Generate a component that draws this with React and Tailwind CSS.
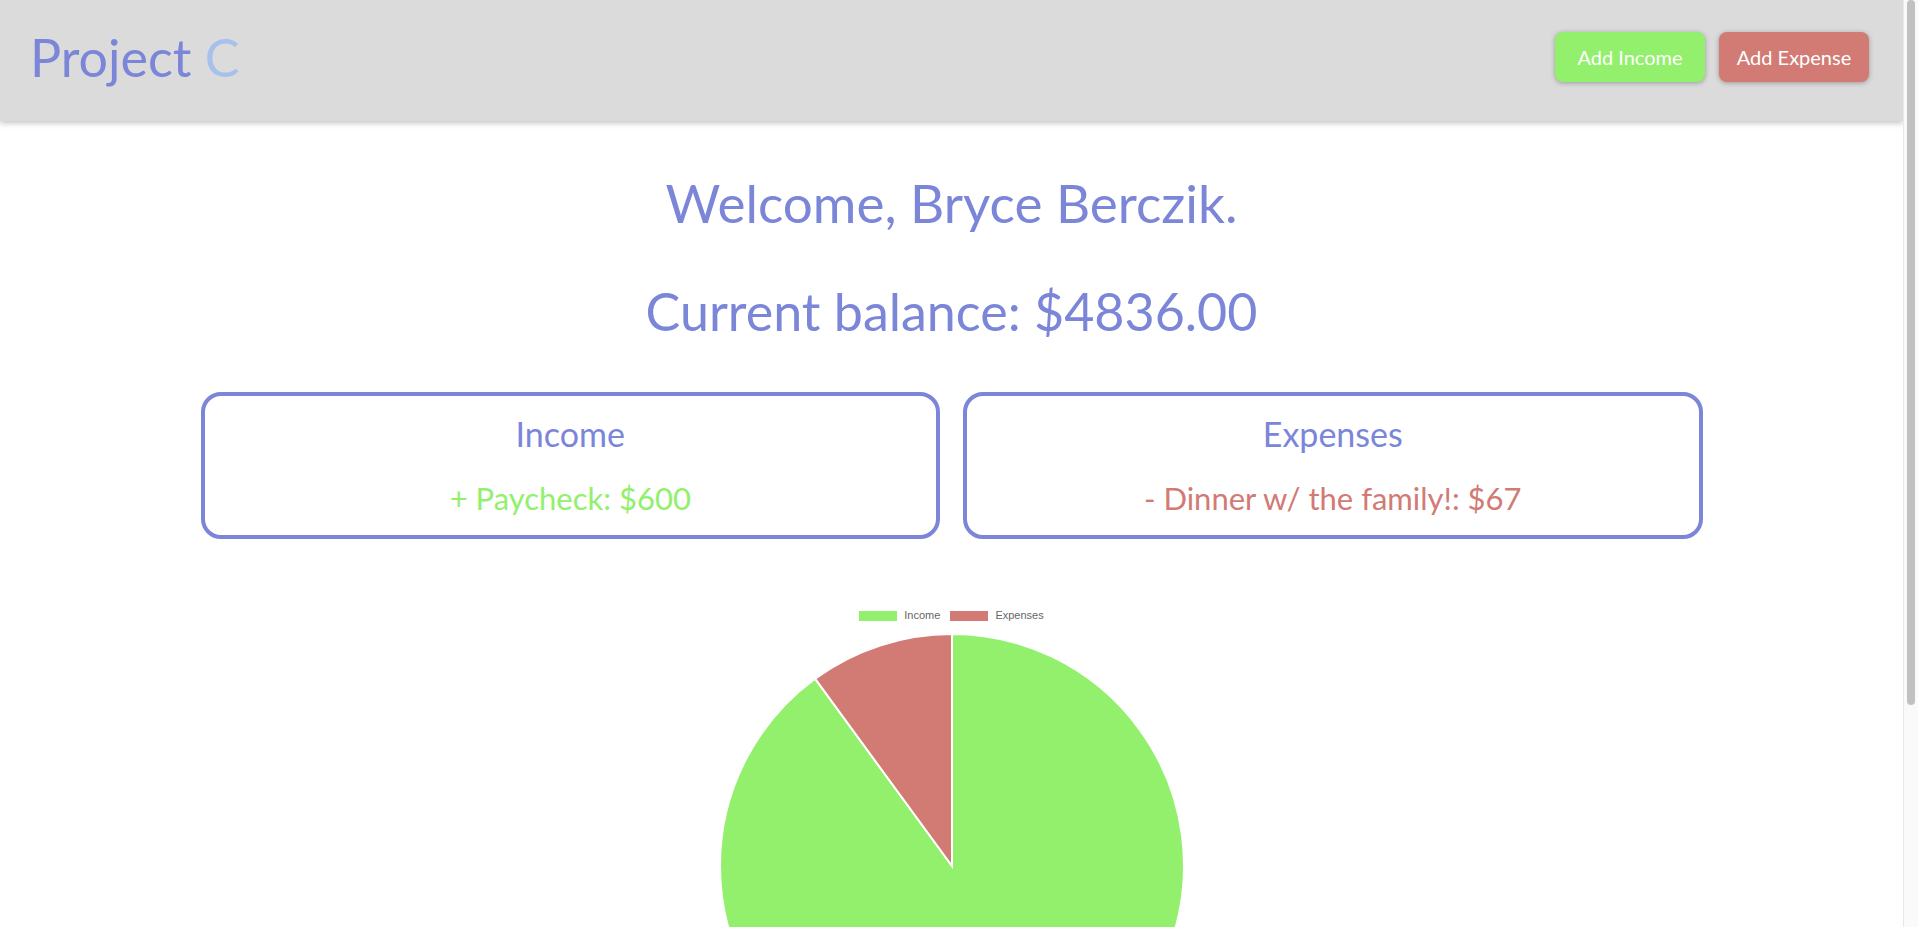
export default function App() {
  const income = 600;
  const expense = 67;
  const r = 232;
  const theta = (income / (income + expense)) * 2 * Math.PI;
  const px = (r + r * Math.sin(theta)).toFixed(2);
  const py = (r - r * Math.cos(theta)).toFixed(2);

  return (
    <div className="flex h-screen overflow-hidden bg-white font-['Lato',sans-serif] text-[#7b86d9]">
      <div className="min-w-0 flex-1">
        <header className="flex h-[121px] items-center justify-between bg-[#dbdbdb] pl-[30px] pr-[34px] shadow-[0_2px_6px_rgba(0,0,0,0.25)]">
          <div className="pb-[8px] text-[52px] leading-none">
            Project <span className="text-[#a6c2ec]">C</span>
          </div>
          <div className="mb-[8px] flex gap-[14px]">
            <button className="h-[50px] w-[150px] rounded-[8px] bg-[#92f06c] text-[20px] text-white shadow-[0_1px_5px_rgba(0,0,0,0.3)]">
              Add Income
            </button>
            <button className="h-[50px] w-[150px] rounded-[8px] bg-[#d27a74] text-[20px] text-white shadow-[0_1px_5px_rgba(0,0,0,0.3)]">
              Add Expense
            </button>
          </div>
        </header>

        <main className="flex flex-col items-center">
          <h1 className="mt-[55px] text-[53px] leading-none">Welcome, Bryce Berczik.</h1>
          <h2 className="mt-[56px] text-[52px] leading-none">Current balance: $4836.00</h2>

          <div className="mt-[55px] grid w-[1502px] grid-cols-2 gap-[23px]">
            <div className="flex h-[147px] flex-col items-center gap-[32px] rounded-[20px] border-4 border-[#7b86d9] pt-[21px]">
              <div className="text-[34px] leading-none">Income</div>
              <div className="text-[31px] leading-none text-[#92f06c]">+ Paycheck: $600</div>
            </div>
            <div className="flex h-[147px] flex-col items-center gap-[32px] rounded-[20px] border-4 border-[#7b86d9] pt-[21px]">
              <div className="text-[34px] leading-none">Expenses</div>
              <div className="text-[31px] leading-none text-[#d27a74]">- Dinner w/ the family!: $67</div>
            </div>
          </div>

          <div className="mt-[71px] flex items-center gap-[10px] font-['Liberation_Sans',sans-serif] text-[11px] leading-none text-[#666]">
            <div className="flex items-center gap-[7px]">
              <span className="h-[10px] w-[38px] bg-[#92f06c]" />
              <span>Income</span>
            </div>
            <div className="flex items-center gap-[7px]">
              <span className="h-[10px] w-[38px] bg-[#d27a74]" />
              <span>Expenses</span>
            </div>
          </div>

          <svg width="464" height="464" viewBox="0 0 464 464" className="mt-[13px] shrink-0">
            <path d={`M${r},${r} L${r},0 A${r},${r} 0 1 1 ${px},${py} Z`} fill="#92f06c" stroke="#fff" strokeWidth="2" />
            <path d={`M${r},${r} L${px},${py} A${r},${r} 0 0 1 ${r},0 Z`} fill="#d27a74" stroke="#fff" strokeWidth="2" />
          </svg>
        </main>
      </div>

      <aside className="w-[15px] shrink-0 border-l border-[#e8e8e8] bg-[#fafafa] pl-[3px]">
        <div className="h-[705px] w-[8px] rounded-full bg-[#c1c1c1]" />
      </aside>
    </div>
  );
}
